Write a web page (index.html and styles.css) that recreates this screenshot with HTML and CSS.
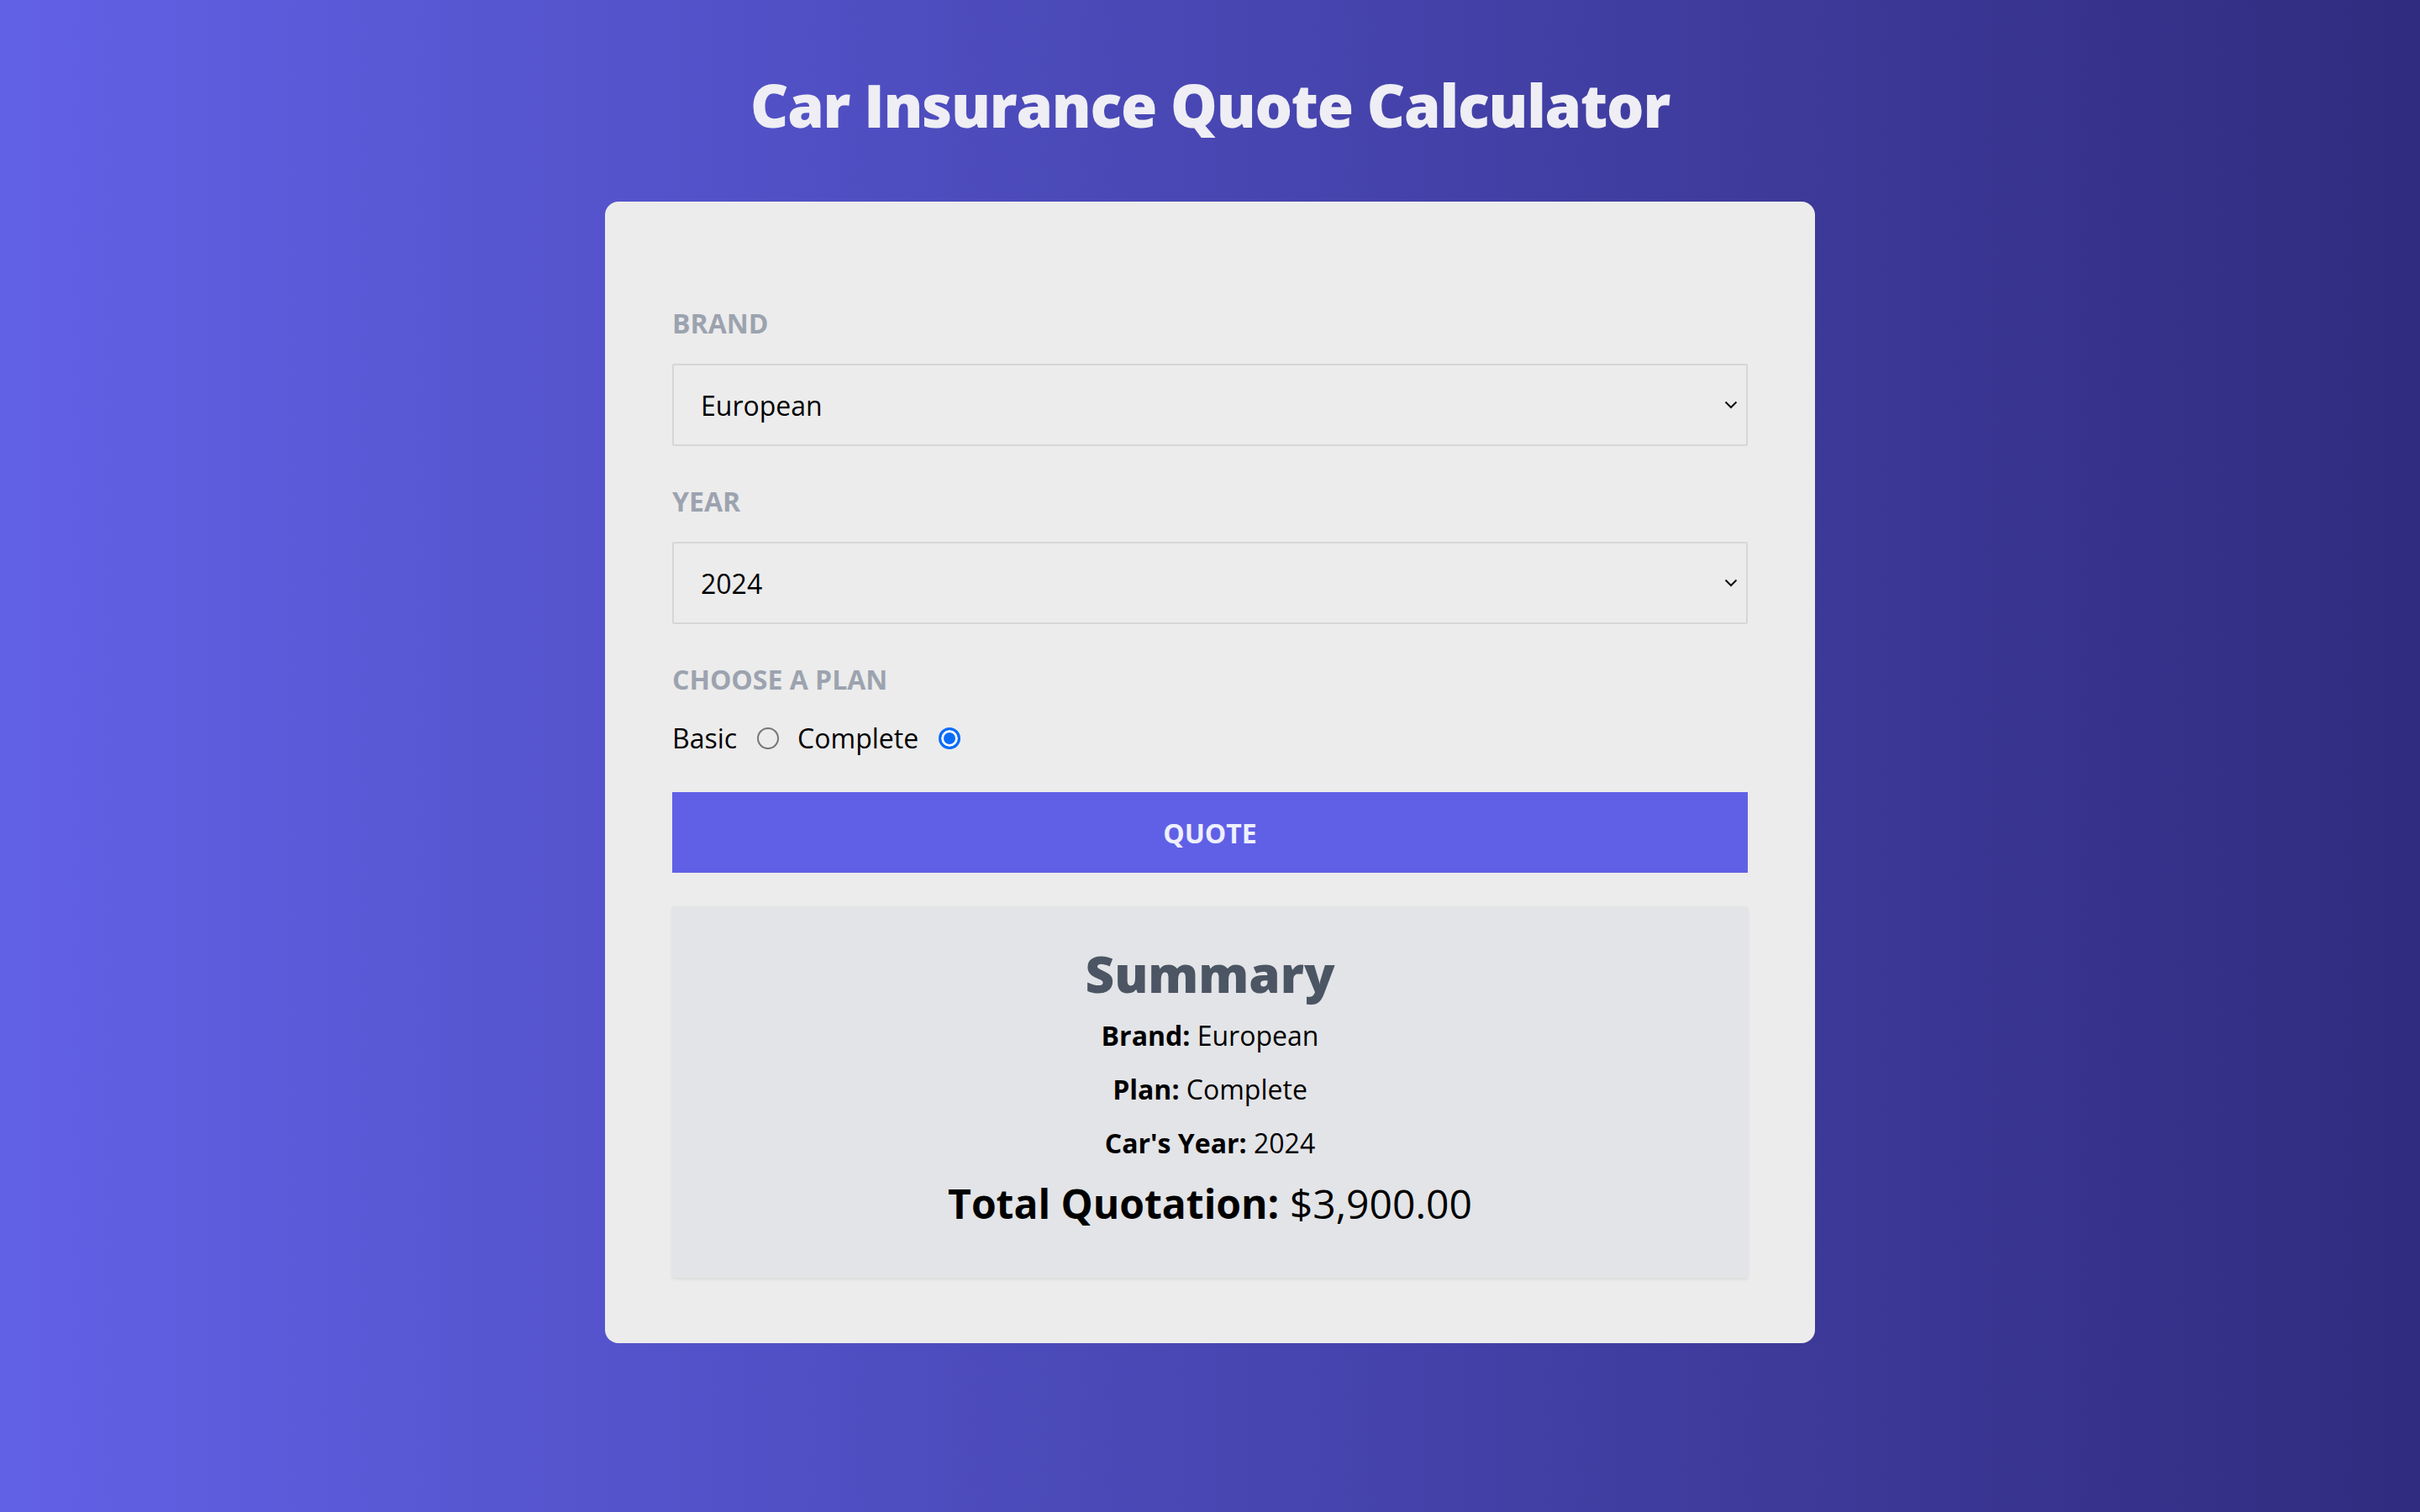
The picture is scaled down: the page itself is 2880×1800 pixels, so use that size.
FILE: index.html
```html
<!DOCTYPE html>
<html lang="en">
<head>
<meta charset="utf-8">
<title>Car Insurance Quote Calculator</title>
<link rel="stylesheet" href="styles.css">
</head>
<body>
<header class="header">
  <h1 class="title">Car Insurance Quote Calculator</h1>
</header>
<main class="card">
  <form class="form">
    <div class="field">
      <label class="label" for="brand">Brand</label>
      <div class="select-wrap">
        <select id="brand" class="select">
          <option>European</option>
          <option>American</option>
          <option>Asian</option>
        </select>
        <svg class="chevron" viewBox="0 0 16 10" width="16" height="10"><path d="M1.5 1.5 L8 8 L14.5 1.5" fill="none" stroke="#111" stroke-width="2"/></svg>
      </div>
    </div>
    <div class="field">
      <label class="label" for="year">Year</label>
      <div class="select-wrap">
        <select id="year" class="select">
          <option>2024</option>
          <option>2023</option>
          <option>2022</option>
        </select>
        <svg class="chevron" viewBox="0 0 16 10" width="16" height="10"><path d="M1.5 1.5 L8 8 L14.5 1.5" fill="none" stroke="#111" stroke-width="2"/></svg>
      </div>
    </div>
    <div class="field field-plan">
      <span class="label">Choose a plan</span>
      <div class="radios">
        <label class="radio-label" for="basic">Basic</label>
        <input class="radio" type="radio" id="basic" name="plan" value="basic">
        <label class="radio-label" for="complete">Complete</label>
        <input class="radio" type="radio" id="complete" name="plan" value="complete" checked>
      </div>
    </div>
    <button type="button" class="button">Quote</button>
  </form>
  <section class="summary">
    <h2 class="summary-title">Summary</h2>
    <p class="summary-line"><strong>Brand:</strong> European</p>
    <p class="summary-line"><strong>Plan:</strong> Complete</p>
    <p class="summary-line"><strong>Car's Year:</strong> 2024</p>
    <p class="summary-total"><strong>Total Quotation:</strong> $3,900.00</p>
  </section>
</main>
</body>
</html>
```
FILE: styles.css
```css
html, body {
  margin: 0;
  padding: 0;
}
body {
  min-height: 100vh;
  background: linear-gradient(to right, #6161e6 0%, #302c7f 100%);
  font-family: "Open Sans", "Noto Sans", sans-serif;
  color: #000;
  display: flex;
  flex-direction: column;
  align-items: center;
}
.header {
  padding-top: 85px;
  padding-bottom: 75px;
}
.title {
  margin: 0;
  font-size: 70px;
  line-height: 80px;
  font-weight: 800;
  letter-spacing: -1.2px;
  color: #eeeef4;
  text-align: center;
}
.card {
  width: 1440px;
  box-sizing: border-box;
  background: #ececec;
  border-radius: 16px;
  padding: 121px 80px 78px;
}
.form {
  display: flex;
  flex-direction: column;
}
.field {
  display: flex;
  flex-direction: column;
  margin-bottom: 42px;
}
.label {
  display: block;
  font-size: 32px;
  line-height: 48px;
  font-weight: 700;
  color: #9ca3af;
  text-transform: uppercase;
  margin-bottom: 24px;
}
.select-wrap {
  position: relative;
}
.select {
  appearance: none;
  -webkit-appearance: none;
  width: 100%;
  height: 98px;
  box-sizing: border-box;
  border: 2px solid #d6d6d6;
  border-radius: 2px;
  background: #ececec;
  padding: 0 64px 0 32px;
  font-family: inherit;
  font-size: 32px;
  color: #000;
  outline: none;
}
.chevron {
  position: absolute;
  right: 12px;
  top: 44px;
  pointer-events: none;
}
.field-plan {
  margin-top: 0;
  margin-bottom: 40px;
}
.field-plan .label {
  margin-bottom: 22px;
}
.radios {
  display: flex;
  align-items: center;
  height: 48px;
}
.radio-label {
  font-size: 32px;
  line-height: 48px;
}
.radio {
  appearance: none;
  -webkit-appearance: none;
  width: 26px;
  height: 26px;
  box-sizing: border-box;
  margin: 0 22px 0 24px;
  border: 2px solid #767676;
  border-radius: 50%;
  background: transparent;
}
.radio:checked {
  border: 3px solid #0b6cf8;
  background: #0b6cf8;
  box-shadow: inset 0 0 0 3px #fff;
}
.button {
  height: 96px;
  border: none;
  background: #6060e6;
  color: #eef0ff;
  font-family: inherit;
  font-size: 32px;
  font-weight: 700;
  text-transform: uppercase;
  cursor: pointer;
}
.summary {
  margin-top: 40px;
  background: #e3e4e7;
  box-shadow: 0 2px 4px rgba(0, 0, 0, 0.08);
  padding: 44px 40px 40px;
  text-align: center;
}
.summary-title {
  margin: 0 0 14px;
  font-size: 60px;
  line-height: 72px;
  font-weight: 800;
  color: #4b5563;
}
.summary-line {
  margin: 0 0 16px;
  font-size: 32px;
  line-height: 48px;
}
.summary-total {
  margin: 0 0 16px;
  font-size: 48px;
  line-height: 64px;
}
```
